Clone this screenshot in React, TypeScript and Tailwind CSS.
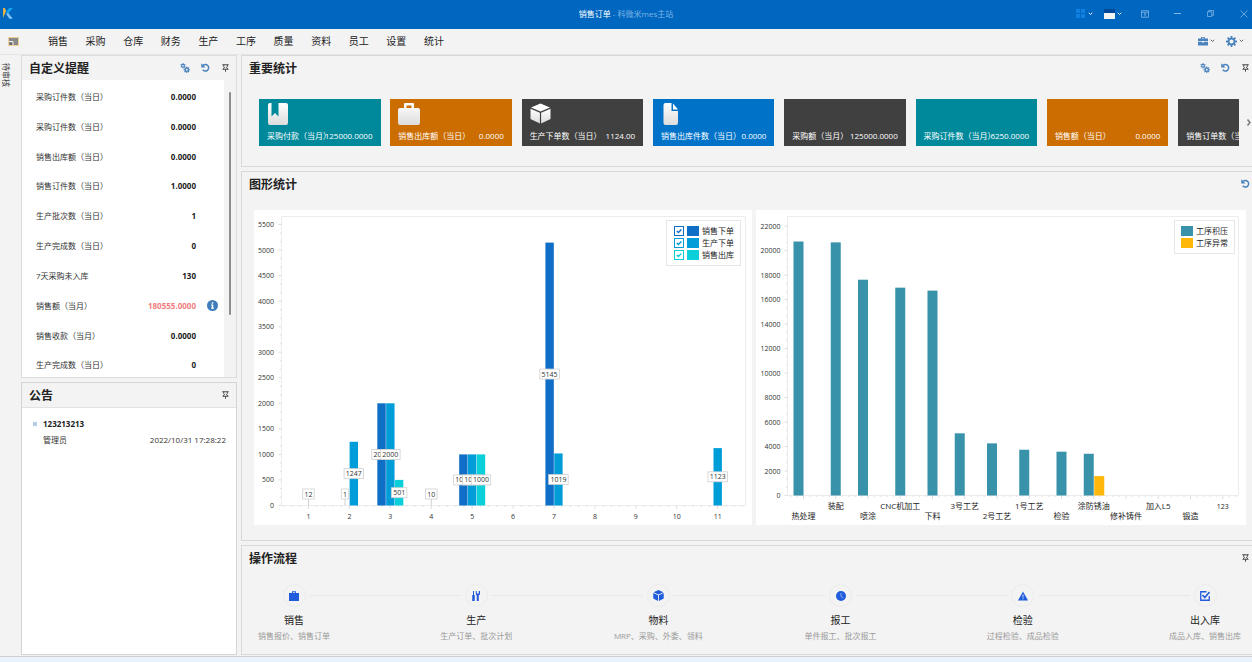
import { useState, type ReactNode } from "react";

const MENU = ["销售", "采购", "仓库", "财务", "生产", "工序", "质量", "资料", "员工", "设置", "统计"];

const REMINDERS = [
  { label: "采购订件数（当日）", value: "0.0000" },
  { label: "采购订件数（当日）", value: "0.0000" },
  { label: "销售出库额（当日）", value: "0.0000" },
  { label: "销售订件数（当日）", value: "1.0000" },
  { label: "生产批次数（当日）", value: "1" },
  { label: "生产完成数（当日）", value: "0" },
  { label: "7天采购未入库", value: "130" },
  { label: "销售额（当月）", value: "180555.0000", alert: true },
  { label: "销售收款（当月）", value: "0.0000" },
  { label: "生产完成数（当日）", value: "0" },
];

/* ---------- icons ---------- */

function Gear({ cx, cy, r, hole, teeth }: { cx: number; cy: number; r: number; hole: number; teeth: number }) {
  const spokes = Array.from({ length: teeth }, (_, i) => (i * 360) / teeth);
  return (
    <g>
      {spokes.map((a) => (
        <rect
          key={a}
          x={cx - r * 0.17}
          y={cy - r}
          width={r * 0.34}
          height={r * 0.5}
          fill="currentColor"
          transform={`rotate(${a} ${cx} ${cy})`}
        />
      ))}
      <circle cx={cx} cy={cy} r={(r * 0.7 + hole) / 2} fill="none" stroke="currentColor" strokeWidth={r * 0.7 - hole} />
    </g>
  );
}

const GearsIcon = () => (
  <svg viewBox="0 0 20 20" className="size-[10px]">
    <Gear cx={6} cy={5.5} r={5.5} hole={1.7} teeth={6} />
    <Gear cx={13.500} cy={13.500} r={6.500} hole={1.900} teeth={8} />
  </svg>
);

const GearIcon = () => (
  <svg viewBox="0 0 20 20" className="size-[11px]">
    <Gear cx={10} cy={10} r={10} hole={3.800} teeth={8} />
  </svg>
);

const RefreshIcon = () => (
  <svg viewBox="0 0 18 18" className="size-[9px]">
    <path d="M4 5.200A6.500 6.500 0 1 1 3.500 13.500" fill="none" stroke="currentColor" strokeWidth="3" />
    <path d="M0.500 0.500v8.500h8.500z" fill="currentColor" />
  </svg>
);

const PinIcon = () => (
  <svg viewBox="0 0 14 16" className="h-2 w-[7px]" fill="none" stroke="currentColor" strokeWidth="1.800">
    <path d="M0.500 1.500h13M3.500 1.500v4l1.500 2-3.500 3h11l-3.500-3 1.500-2v-4M7 10.500v5" />
  </svg>
);

const Chevron = ({ className }: { className: string }) => (
  <svg viewBox="0 0 10 8" className={`h-1 w-[5px] ${className}`} fill="none" stroke="currentColor" strokeWidth="1.800">
    <path d="M1.500 1.500l3.500 3.500 3.500-3.500" />
  </svg>
);

const InfoIcon = () => (
  <svg viewBox="0 0 22 22" className="size-[11px]">
    <circle cx="11" cy="11" r="11" fill="#3f7cbc" />
    <path d="M9.500 4.500h3v3h-3zM8 9h4.500v6.500h1.500v2H8v-2h1.500v-4.500H8z" fill="#fff" />
  </svg>
);

const TileGradient = ({ id }: { id: string }) => (
  <defs>
    <linearGradient id={id} x1="0" y1="0" x2="0" y2="1">
      <stop offset="0" stopColor="#ffffff" />
      <stop offset="1" stopColor="#dcdcdc" />
    </linearGradient>
  </defs>
);

const BookTile = () => (
  <svg viewBox="0 0 22 22" className="size-[22px]">
    <TileGradient id="g-book" />
    <path d="M3 0H4.500v13.500l3.500-3.500 3.500 3.500V0h7.500a2 2 0 0 1 2 2v18a2 2 0 0 1-2 2H3a2 2 0 0 1-2-2V2a2 2 0 0 1 2-2z" fill="url(#g-book)" />
  </svg>
);

const BagTile = () => (
  <svg viewBox="0 0 22 22" className="size-[22px]">
    <TileGradient id="g-bag" />
    <path
      d="M6 5V1a1 1 0 0 1 1-1h8a1 1 0 0 1 1 1v4h4a2 2 0 0 1 2 2v13a2 2 0 0 1-2 2H2a2 2 0 0 1-2-2V7a2 2 0 0 1 2-2zM8.500 5h5V2.500h-5z"
      fillRule="evenodd"
      fill="url(#g-bag)"
    />
  </svg>
);

const BoxTile = () => (
  <svg viewBox="0 0 22 22" className="size-[22px]">
    <TileGradient id="g-box" />
    <path d="M10.500 0.500l9.500 4-9.500 4-9.500-4z" fill="#fff" />
    <path d="M0.500 5.700l9.400 4V20.500L0.500 16z" fill="url(#g-box)" />
    <path d="M20.500 5.700l-9.400 4V20.500L20.500 16z" fill="url(#g-box)" />
  </svg>
);

const FileTile = () => (
  <svg viewBox="0 0 22 22" className="size-[22px]">
    <TileGradient id="g-file" />
    <path d="M4.500 0h6v8h6.500v12a2 2 0 0 1-2 2H4.500a2 2 0 0 1-2-2V2a2 2 0 0 1 2-2z" fill="url(#g-file)" />
    <path d="M12 0.500L17 6.500h-5z" fill="#fff" />
  </svg>
);

const FlowBag = () => (
  <svg viewBox="0 0 20 20" className="size-[10px]">
    <path d="M6 4V0.500h8V4h6v16H0V4zM8 4h4V2.500H8z" fillRule="evenodd" fill="currentColor" />
  </svg>
);
const FlowTools = () => (
  <svg viewBox="0 0 20 20" className="size-[10px]" fill="currentColor">
    <path d="M4 0h2v8h1.500v12H2.500V8H4z" />
    <path d="M9.500 0h2v5h4V0h2.500v6.500L15.500 9v11h-4V9L9.500 6.500z" />
  </svg>
);
const FlowBox = () => (
  <svg viewBox="0 0 20 20" className="size-[11px]" fill="currentColor">
    <path d="M10 0l9 4-9 4-9-4z" />
    <path d="M0.500 5.500L9.200 9.400V20L0.500 15.500z" />
    <path d="M19.500 5.500L10.800 9.400V20l8.700-4.500z" />
  </svg>
);
const FlowClock = () => (
  <svg viewBox="0 0 20 20" className="size-[10px]">
    <circle cx="10" cy="10" r="10" fill="currentColor" />
    <path d="M10 4v6.500l4.500 3.500" fill="none" stroke="#9db9ef" strokeWidth="1.800" />
  </svg>
);
const FlowWarn = () => (
  <svg viewBox="0 0 20 20" className="size-[10px]">
    <path d="M10 1l10 18H0z" fill="currentColor" />
    <path d="M9 7h2v6H9zM9 14.500h2v2H9z" fill="#dbe6fb" />
  </svg>
);
const FlowCheck = () => (
  <svg viewBox="0 0 20 20" className="size-[10px]" fill="none" stroke="currentColor" strokeWidth="2.600">
    <path d="M13 1.500H1.500v17h17V10" />
    <path d="M5 8l4.500 5L19 2" strokeWidth="3.200" />
  </svg>
);

/* ---------- panels ---------- */

function IconButton({ label, children, dark }: { label: string; children: ReactNode; dark?: boolean }) {
  return (
    <button
      type="button"
      aria-label={label}
      className={`flex size-3 items-center justify-center ${dark ? "text-[#3a3a3a]" : "text-[#4a82bd]"}`}
    >
      {children}
    </button>
  );
}

function PanelHeader({ title, children }: { title: string; children?: ReactNode }) {
  return (
    <header className="flex h-6 shrink-0 items-center justify-between pr-px pl-[7px]">
      <h2 className="pt-px text-xs leading-4 font-bold text-[#222]">{title}</h2>
      <div className="flex items-center gap-2 pb-px">{children}</div>
    </header>
  );
}

function Reminders() {
  return (
    <section className="flex min-h-0 flex-[323] flex-col border border-[#dcdcdc]">
      <div className="pr-1">
        <PanelHeader title="自定义提醒">
          <IconButton label="配置"><GearsIcon /></IconButton>
          <IconButton label="刷新"><RefreshIcon /></IconButton>
          <IconButton label="固定" dark><PinIcon /></IconButton>
        </PanelHeader>
      </div>
      <div className="flex flex-1 bg-white">
        <ul className="flex flex-1 flex-col justify-between pt-[9px] pb-1 pl-[14px]">
          {REMINDERS.map((r, i) => (
            <li key={i} className="flex h-4 items-center">
              <span>{r.label}</span>
              <span className={`ml-auto font-bold ${r.alert ? "text-[#f08080]" : "text-[#222]"}`}>{r.value}</span>
              <span className="flex w-7 justify-center pl-1">{r.alert && <InfoIcon />}</span>
            </li>
          ))}
        </ul>
        <div className="flex w-3 justify-center bg-[#f3f3f3] pt-3">
          <div className="h-[78%] w-[2px] rounded-full bg-[#8e8e8e]" />
        </div>
      </div>
    </section>
  );
}

function Notices() {
  return (
    <section className="flex min-h-0 flex-[272] flex-col border border-[#d4d4d4]">
      <div className="border-b border-[#e2e2e2] pr-1">
        <PanelHeader title="公告">
          <IconButton label="固定" dark><PinIcon /></IconButton>
        </PanelHeader>
      </div>
      <article className="flex-1 bg-white pt-2 pr-[10px] pl-[11px]">
        <h3 className="flex h-4 items-center gap-[6px] font-bold text-[#222]">
          <i className="block size-1 bg-[#b5cde8]" />
          123213213
        </h3>
        <p className="flex h-4 items-center justify-between pl-[10px]">
          <span>管理员</span>
          <time>2022/10/31 17:28:22</time>
        </p>
      </article>
    </section>
  );
}

const TILES = [
  { label: "采购付款（当月）", value: "125000.0000", bg: "bg-[#00899b]", icon: <BookTile /> },
  { label: "销售出库额（当日）", value: "0.0000", bg: "bg-[#cb6d00]", icon: <BagTile /> },
  { label: "生产下单数（当日）", value: "1124.00", bg: "bg-[#404040]", icon: <BoxTile /> },
  { label: "销售出库件数（当日）", value: "0.0000", bg: "bg-[#0073c9]", icon: <FileTile /> },
  { label: "采购额（当月）", value: "125000.0000", bg: "bg-[#404040]" },
  { label: "采购订件数（当月）", value: "6250.0000", bg: "bg-[#00899b]" },
  { label: "销售额（当日）", value: "0.0000", bg: "bg-[#cb6d00]" },
  { label: "销售订单数（当日）", value: "0", bg: "bg-[#404040]" },
];

function KeyStats() {
  return (
    <section className="border border-r-0 border-[#d8d8d8]">
      <PanelHeader title="重要统计">
        <IconButton label="配置"><GearsIcon /></IconButton>
        <IconButton label="刷新"><RefreshIcon /></IconButton>
        <IconButton label="固定" dark><PinIcon /></IconButton>
      </PanelHeader>
      <div className="flex items-center pt-[19px] pb-5 pl-[17px]">
        <ul className="flex flex-1 gap-[1%] overflow-hidden">
          {TILES.map((t) => (
            <li
              key={t.label}
              className={`flex h-[47px] w-[12.4%] shrink-0 flex-col justify-between px-2 pt-1 pb-1 whitespace-nowrap text-white ${t.bg}`}
            >
              <span className="h-[22px]">{t.icon}</span>
              <span className="flex h-3 justify-between leading-3">
                <span className="w-0 flex-1">{t.label}</span>
                <span>{t.value}</span>
              </span>
            </li>
          ))}
        </ul>
        <button type="button" aria-label="下一页" className="flex w-[13px] justify-end text-[#7a7a7a]">
          <svg viewBox="0 0 10 14" className="h-[7px] w-[6px]" fill="none" stroke="currentColor" strokeWidth="3">
            <path d="M2 1l5 6-5 6" />
          </svg>
        </button>
      </div>
    </section>
  );
}

/* ---------- charts ---------- */

const SERIES = [
  { name: "销售下单", fill: "#0f6fc6", swatch: "bg-[#0f6fc6]", box: "border-[#0f6fc6] text-[#0f6fc6]" },
  { name: "生产下单", fill: "#009dd9", swatch: "bg-[#009dd9]", box: "border-[#009dd9] text-[#009dd9]" },
  { name: "销售出库", fill: "#0bd0d9", swatch: "bg-[#0bd0d9]", box: "border-[#0bd0d9] text-[#0bd0d9]" },
];

const ORDERS: { month: number; bars: [series: number, value: number][] }[] = [
  { month: 1, bars: [[1, 12]] },
  { month: 2, bars: [[0, 1], [1, 1247]] },
  { month: 3, bars: [[0, 2000], [1, 2000], [2, 501]] },
  { month: 4, bars: [[1, 10]] },
  { month: 5, bars: [[0, 1000], [1, 1000], [2, 1000]] },
  { month: 7, bars: [[0, 5145], [1, 1019]] },
  { month: 11, bars: [[1, 1123]] },
];

function range(n: number) {
  return Array.from({ length: n }, (_, i) => i);
}

function OrdersChart() {
  const [shown, setShown] = useState([true, true, true]);
  const zero = 295.5;
  const perUnit = 0.0511;
  const left = 27.5;
  const first = 54.5;
  const step = 40.92;
  const barW = 8.8;
  const visible = ORDERS.flatMap(({ month, bars }) =>
    bars
      .map(([s, v], i) => ({
        key: `${month}-${s}`,
        s,
        v,
        cx: first + (month - 1) * step + (i - (bars.length - 1) / 2) * barW,
      }))
      .filter((b) => shown[b.s]),
  );
  return (
    <figure className="relative bg-white">
      <svg viewBox="0 0 498 315" className="block h-auto w-full text-[7px]" role="img" aria-label="订单统计">
        <path d={`M${left} ${zero}V6.500H491.500V${zero}z`} fill="none" stroke="#ececec" />
        {range(12).map((i) => {
          const y = zero - i * 500 * perUnit;
          return (
            <g key={i}>
              <path d={`M${left - 3} ${y}h3`} stroke="#dedede" />
              {i < 11 && <path d={`M${left - 1.500} ${y - 8.500}h1.500M${left - 1.500} ${y - 17}h1.500`} stroke="#e2e2e2" />}
              <text x="20" y={y + 2.5} textAnchor="end" fill="#333">{i * 500}</text>
            </g>
          );
        })}
        {range(57).map((i) => {
          const x = first + ((i - 3) * step) / 5;
          return <path key={i} d={`M${x} ${zero}v${(i - 3) % 5 === 0 ? 3.500 : 1.500}`} stroke="#dedede" />;
        })}
        {range(11).map((i) => (
          <text key={i} x={first + i * step} y="309" textAnchor="middle" fill="#333">{i + 1}</text>
        ))}
        {visible.map((b) =>
          b.v > 100 ? (
            <rect
              key={b.key}
              x={b.cx - barW / 2 + 0.2}
              y={zero - b.v * perUnit}
              width={barW - 0.4}
              height={b.v * perUnit}
              fill={SERIES[b.s].fill}
            />
          ) : (
            <path key={b.key} d={`M${b.cx} ${zero}v-8`} stroke="#d0d0d0" />
          ),
        )}
        {visible.map((b) => {
          const text = String(b.v);
          const w = text.length * 4 + 3.5;
          const y = b.v > 100 ? zero - (b.v * perUnit) / 2 : 284;
          return (
            <g key={b.key}>
              <rect x={b.cx - w / 2} y={y - 5} width={w} height="10" fill="#fff" stroke="#cfcfcf" strokeWidth="0.800" />
              <text x={b.cx} y={y + 2.5} textAnchor="middle" fill="#333">{text}</text>
            </g>
          );
        })}
      </svg>
      <div className="absolute top-[10px] right-[11px] border border-[#e6e6e6] bg-white py-1 pr-[6px] pl-[7px] text-[#222]">
        {SERIES.map((s, i) => (
          <label key={s.name} className="flex h-3 items-center gap-[3px]">
            <span className={`relative size-[10px] ${s.box}`}>
              <input
                type="checkbox"
                checked={shown[i]}
                onChange={() => setShown(shown.map((v, j) => (j === i ? !v : v)))}
                className={`block size-[10px] appearance-none border bg-white ${s.box}`}
              />
              {shown[i] && (
                <svg viewBox="0 0 10 10" className="pointer-events-none absolute inset-0" fill="none" stroke="currentColor" strokeWidth="1.400">
                  <path d="M2.800 5l1.600 1.600 3-3.200" />
                </svg>
              )}
            </span>
            <span className={`h-[10px] w-3 ${s.swatch}`} />
            <span>{s.name}</span>
          </label>
        ))}
      </div>
    </figure>
  );
}

const PROCESSES: { name: string; backlog: number; fault?: number; offset: number }[] = [
  { name: "热处理", backlog: 20750, offset: -5 },
  { name: "装配", backlog: 20680, offset: 0 },
  { name: "喷涂", backlog: 17630, offset: -5 },
  { name: "CNC机加工", backlog: 16980, offset: 0 },
  { name: "下料", backlog: 16740, offset: 0 },
  { name: "3号工艺", backlog: 5080, offset: -5 },
  { name: "2号工艺", backlog: 4260, offset: -5 },
  { name: "1号工艺", backlog: 3740, offset: -5 },
  { name: "检验", backlog: 3580, offset: 0 },
  { name: "涂防锈油", backlog: 3410, fault: 1585, offset: -5 },
  { name: "修补铸件", backlog: 0, offset: 0 },
  { name: "加入L5", backlog: 0, offset: 0 },
  { name: "锻造", backlog: 0, offset: 0 },
  { name: "123", backlog: 0, offset: 0 },
];

function ProcessChart() {
  const zero = 285.5;
  const perUnit = 0.01224;
  const left = 31.5;
  const first = 47.5;
  const step = 32.25;
  return (
    <figure className="relative bg-white">
      <svg viewBox="0 0 490 315" className="block h-auto w-full text-[7px]" role="img" aria-label="工序统计">
        <path d={`M${left} ${zero}V6.500H482.500V${zero}z`} fill="none" stroke="#ececec" />
        {range(12).map((i) => {
          const y = zero - i * 2000 * perUnit;
          return (
            <g key={i}>
              <path d={`M${left - 3} ${y}h3`} stroke="#dedede" />
              {i < 11 && <path d={`M${left - 1.500} ${y - 8.200}h1.500M${left - 1.500} ${y - 16.300}h1.500`} stroke="#e2e2e2" />}
              <text x="24.500" y={y + 2.5} textAnchor="end" fill="#333">{i * 2000}</text>
            </g>
          );
        })}
        {range(70).map((i) => {
          const x = first + ((i - 2) * step) / 5;
          return <path key={i} d={`M${x} ${zero}v${(i - 2) % 5 === 0 ? 3.500 : 1.500}`} stroke="#dedede" />;
        })}
        {PROCESSES.map((p, i) => {
          const cx = first + i * step;
          return (
            <g key={p.name}>
              <rect x={cx + p.offset - 5} y={zero - p.backlog * perUnit} width="10" height={p.backlog * perUnit} fill="#3892a9" />
              {p.fault && <rect x={cx + 0.5} y={zero - p.fault * perUnit} width="10" height={p.fault * perUnit} fill="#feb80a" />}
              <text x={cx} y={i % 2 ? 299 : 309} textAnchor="middle" fill="#222" className={p.name === "123" ? "text-[7px]" : "text-[8px]"}>
                {p.name}
              </text>
            </g>
          );
        })}
      </svg>
      <div className="absolute top-[10px] right-[11px] border border-[#e6e6e6] bg-white px-[6px] py-1 text-[#222]">
        <p className="flex h-3 items-center gap-[3px]"><i className="h-[10px] w-3 bg-[#3892a9]" />工序积压</p>
        <p className="flex h-3 items-center gap-[3px]"><i className="h-[10px] w-3 bg-[#feb80a]" />工序异常</p>
      </div>
    </figure>
  );
}

function Charts() {
  return (
    <section className="flex-1 border border-r-0 border-[#d8d8d8]">
      <PanelHeader title="图形统计">
        <IconButton label="刷新"><RefreshIcon /></IconButton>
      </PanelHeader>
      <div className="grid grid-cols-[498fr_490fr] gap-1 pt-[14px] pr-[6px] pl-3">
        <OrdersChart />
        <ProcessChart />
      </div>
    </section>
  );
}

const STEPS = [
  { title: "销售", note: "销售报价、销售订单", icon: <FlowBag /> },
  { title: "生产", note: "生产订单、批次计划", icon: <FlowTools /> },
  { title: "物料", note: "MRP、采购、外委、领料", icon: <FlowBox /> },
  { title: "报工", note: "单件报工、批次报工", icon: <FlowClock /> },
  { title: "检验", note: "过程检验、成品检验", icon: <FlowWarn /> },
  { title: "出入库", note: "成品入库、销售出库", icon: <FlowCheck /> },
];

function Workflow() {
  return (
    <section className="border border-r-0 border-[#d8d8d8] pb-[11px]">
      <PanelHeader title="操作流程">
        <IconButton label="固定" dark><PinIcon /></IconButton>
      </PanelHeader>
      <ol className="flex pt-[14px] pr-[2px] pl-[7px]">
        {STEPS.map((s, i) => (
          <li key={s.title} className={i < STEPS.length - 1 ? "flex flex-1" : "flex"}>
            <a href={`#step-${i + 1}`} className="flex w-[90px] shrink-0 flex-col items-center whitespace-nowrap">
              <span className="flex size-[23px] items-center justify-center rounded-full border border-[#ebebeb] text-[#215cdc]">
                {s.icon}
              </span>
              <span className="mt-[5px] text-[10px] leading-4 text-[#222]">{s.title}</span>
              <span className="mt-px leading-[14px] text-[#9a9a9a]">{s.note}</span>
            </a>
            {i < STEPS.length - 1 && <span className="-mx-[30px] mt-[11px] h-px flex-1 bg-[#e8e8e8]" />}
          </li>
        ))}
      </ol>
    </section>
  );
}

/* ---------- frame ---------- */

function TitleBar() {
  return (
    <header className="relative flex h-[29px] items-center justify-between bg-[#0067c0] pb-[2px]">
      <svg viewBox="0 0 30 34" className="ml-[3px] h-[11px] w-[10px]">
        <path d="M0 0h5l4 9-9 22z" fill="#f5b83d" />
        <path d="M19 0h11L15 17 9 12z" fill="#12a5f4" />
        <path d="M9 18l6-3 15 18H19z" fill="#7cc4f8" />
      </svg>
      <h1 className="absolute inset-x-0 text-center leading-3 text-[#7db4e6]">
        <span className="text-white">销售订单</span> - 科微米mes主站
      </h1>
      <div className="relative flex items-center gap-4 text-[#86b8e4]">
        <div className="-mr-[2px] flex gap-[11px] text-white">
          <button type="button" aria-label="主题" className="flex items-center gap-[3px]">
            <svg viewBox="0 0 10 10" className="size-[9px]" fill="#0d80e0">
              <path d="M0 0h4.500v4.500H0zM5.500 0H10v4.500H5.500zM0 5.500h4.500V10H0zM5.500 5.500H10V10H5.500z" />
            </svg>
            <Chevron className="text-white" />
          </button>
          <button type="button" aria-label="配色" className="flex items-center gap-[2px]">
            <span className="flex h-[10px] w-[11px] flex-col bg-[#00499a]">
              <span className="mt-auto h-[6px] bg-[#f4f4f4]" />
            </span>
            <Chevron className="text-white" />
          </button>
        </div>
        <button type="button" aria-label="功能区显示选项" className="flex w-[17px] justify-center">
          <svg viewBox="0 0 16 16" className="size-2" fill="none" stroke="currentColor" strokeWidth="1.600">
            <path d="M1 1.500h14v13H1zM1 4.500h14M8 13V7M5.500 9.200L8 6.800l2.500 2.400" />
          </svg>
        </button>
        <button type="button" aria-label="最小化" className="flex w-[17px] justify-center">
          <span className="h-px w-[7px] bg-current" />
        </button>
        <button type="button" aria-label="还原" className="flex w-[17px] justify-center">
          <svg viewBox="0 0 16 16" className="size-[7px]" fill="none" stroke="currentColor" strokeWidth="1.800">
            <path d="M1 4h10v11H1zM4 4V1h11v11h-4" />
          </svg>
        </button>
        <button type="button" aria-label="关闭" className="flex w-[17px] justify-center">
          <svg viewBox="0 0 16 16" className="size-2" fill="none" stroke="currentColor" strokeWidth="1.500">
            <path d="M1 1l14 14M15 1L1 15" />
          </svg>
        </button>
      </div>
    </header>
  );
}

function MenuBar() {
  return (
    <nav className="flex h-[26px] items-center justify-between border-b border-[#e6e6e6] pr-2 pb-px pl-2">
      <div className="flex items-center">
        <button type="button" aria-label="工作台">
          <svg viewBox="0 0 22 18" className="h-[9px] w-[11px]">
            <path d="M1 1h20v16H1z" fill="#8a8a8a" stroke="#efcf94" strokeWidth="2" />
            <path d="M2 9h8v8" fill="none" stroke="#eee" strokeWidth="2" />
            <path d="M4 12h4v4H4z" fill="#666" />
          </svg>
        </button>
        <ul className="ml-[29px] flex w-[396px] justify-between text-[10px] leading-4 text-[#222]">
          {MENU.map((m) => (
            <li key={m}><button type="button">{m}</button></li>
          ))}
        </ul>
      </div>
      <div className="flex items-center gap-[11px] text-[#4a82bd]">
        <button type="button" aria-label="工具箱" className="flex items-center gap-[2px]">
          <svg viewBox="0 0 20 18" className="h-[9px] w-[10px]" fill="currentColor">
            <path d="M6 3V0.500h8V3h6v5H0V3zM8 3h4V2H8zM0 9.500h8V11h4V9.500h8V17H0z" fillRule="evenodd" />
          </svg>
          <Chevron className="text-[#555]" />
        </button>
        <button type="button" aria-label="系统设置" className="flex items-center gap-[2px]">
          <GearIcon />
          <Chevron className="text-[#555]" />
        </button>
      </div>
    </nav>
  );
}

export default function App() {
  return (
    <div className="flex min-h-screen flex-col overflow-x-hidden bg-[#f3f3f3] font-['Open_Sans','Noto_Sans_CJK_SC',sans-serif] text-[8px] leading-3 text-[#333]">
      <TitleBar />
      <MenuBar />
      <main className="flex flex-1 pb-px">
        <aside className="w-[21px] shrink-0 pt-2">
          <button type="button" className="w-3 leading-3 [writing-mode:vertical-rl]">
            <span className="[text-orientation:sideways]">待审核</span>
          </button>
        </aside>
        <div className="flex w-[216px] shrink-0 flex-col gap-1">
          <Reminders />
          <Notices />
        </div>
        <div className="ml-1 flex min-w-0 flex-1 flex-col gap-1">
          <KeyStats />
          <Charts />
          <Workflow />
        </div>
      </main>
      <footer className="h-[6px] border-t border-[#cfcfcf] bg-[#eaf2fb]" />
    </div>
  );
}
